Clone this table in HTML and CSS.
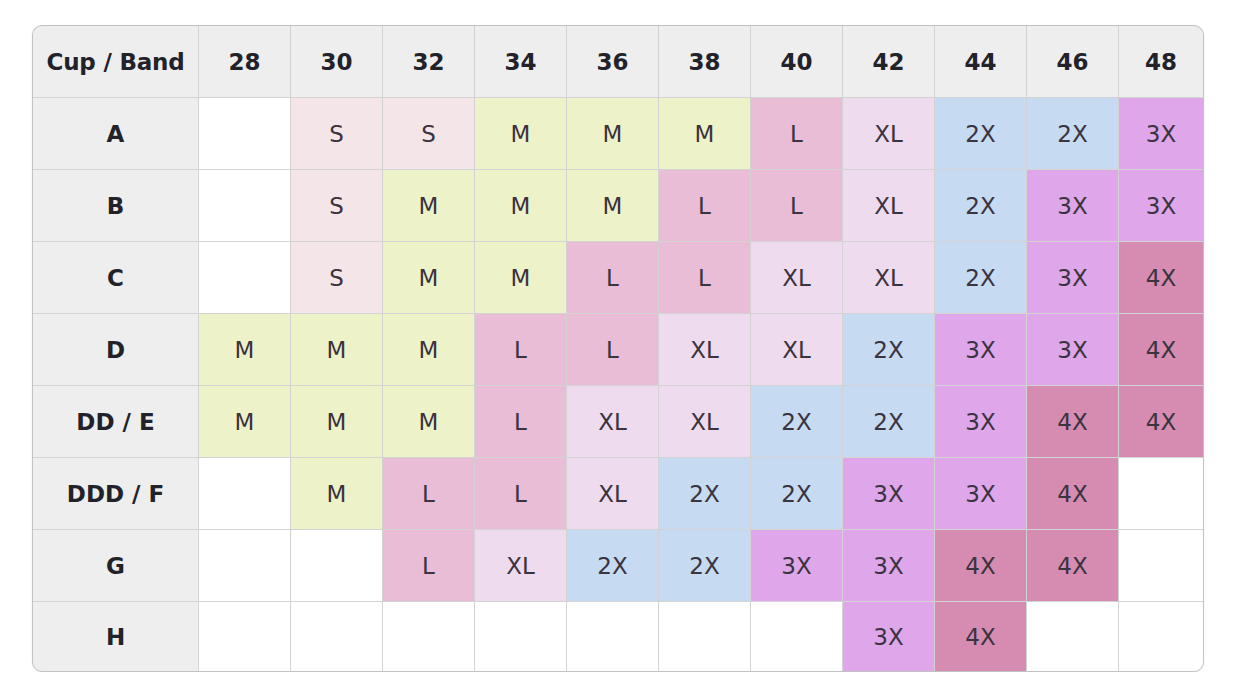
FILE: index.html
```html
<!DOCTYPE html>
<html lang="en">
<head>
<meta charset="utf-8">
<title>Bra Size Chart</title>
<link rel="stylesheet" href="styles.css">
</head>
<body>
<div class="chart">
  <div class="h corner">Cup / Band</div>
  <div class="h">28</div><div class="h">30</div><div class="h">32</div><div class="h">34</div><div class="h">36</div><div class="h">38</div><div class="h">40</div><div class="h">42</div><div class="h">44</div><div class="h">46</div><div class="h">48</div>

  <div class="h cup">A</div>
  <div class="c"></div><div class="c s">S</div><div class="c s">S</div><div class="c m">M</div><div class="c m">M</div><div class="c m">M</div><div class="c l">L</div><div class="c xl">XL</div><div class="c x2">2X</div><div class="c x2">2X</div><div class="c x3">3X</div>

  <div class="h cup">B</div>
  <div class="c"></div><div class="c s">S</div><div class="c m">M</div><div class="c m">M</div><div class="c m">M</div><div class="c l">L</div><div class="c l">L</div><div class="c xl">XL</div><div class="c x2">2X</div><div class="c x3">3X</div><div class="c x3">3X</div>

  <div class="h cup">C</div>
  <div class="c"></div><div class="c s">S</div><div class="c m">M</div><div class="c m">M</div><div class="c l">L</div><div class="c l">L</div><div class="c xl">XL</div><div class="c xl">XL</div><div class="c x2">2X</div><div class="c x3">3X</div><div class="c x4">4X</div>

  <div class="h cup">D</div>
  <div class="c m">M</div><div class="c m">M</div><div class="c m">M</div><div class="c l">L</div><div class="c l">L</div><div class="c xl">XL</div><div class="c xl">XL</div><div class="c x2">2X</div><div class="c x3">3X</div><div class="c x3">3X</div><div class="c x4">4X</div>

  <div class="h cup">DD / E</div>
  <div class="c m">M</div><div class="c m">M</div><div class="c m">M</div><div class="c l">L</div><div class="c xl">XL</div><div class="c xl">XL</div><div class="c x2">2X</div><div class="c x2">2X</div><div class="c x3">3X</div><div class="c x4">4X</div><div class="c x4">4X</div>

  <div class="h cup">DDD / F</div>
  <div class="c"></div><div class="c m">M</div><div class="c l">L</div><div class="c l">L</div><div class="c xl">XL</div><div class="c x2">2X</div><div class="c x2">2X</div><div class="c x3">3X</div><div class="c x3">3X</div><div class="c x4">4X</div><div class="c"></div>

  <div class="h cup">G</div>
  <div class="c"></div><div class="c"></div><div class="c l">L</div><div class="c xl">XL</div><div class="c x2">2X</div><div class="c x2">2X</div><div class="c x3">3X</div><div class="c x3">3X</div><div class="c x4">4X</div><div class="c x4">4X</div><div class="c"></div>

  <div class="h cup">H</div>
  <div class="c"></div><div class="c"></div><div class="c"></div><div class="c"></div><div class="c"></div><div class="c"></div><div class="c"></div><div class="c x3">3X</div><div class="c x4">4X</div><div class="c"></div><div class="c"></div>
</div>
</body>
</html>
```

FILE: styles.css
```css
html, body {
  margin: 0;
  background: #ffffff;
}

body {
  padding: 25px 0 0 32px;
  font-family: "DejaVu Sans", "Liberation Sans", sans-serif;
}

.chart {
  display: grid;
  grid-template-columns: 165px repeat(10, 91px) 84px;
  grid-template-rows: 71px repeat(7, 71px) 69px;
  gap: 1px;
  width: max-content;
  background: #d3d3d3;
  border: 1px solid #c2c2c2;
  border-radius: 10px;
  overflow: hidden;
  box-shadow: 0 1px 3px rgba(0, 0, 0, 0.06);
}

.h, .c {
  display: flex;
  align-items: center;
  justify-content: center;
  font-size: 23px;
}

.h {
  background: #eeeeee;
  color: #22222a;
  font-weight: 700;
}

.corner {
  letter-spacing: -0.2px;
}

.c {
  background: #ffffff;
  color: #3a3340;
  font-weight: 400;
}

.s  { background: #f4e5e9; }
.m  { background: #eef2c9; }
.l  { background: #e9bdd5; }
.xl { background: #eedcee; }
.x2 { background: #c6daf1; }
.x3 { background: #dfa7ea; }
.x4 { background: #d68bb0; }
```
